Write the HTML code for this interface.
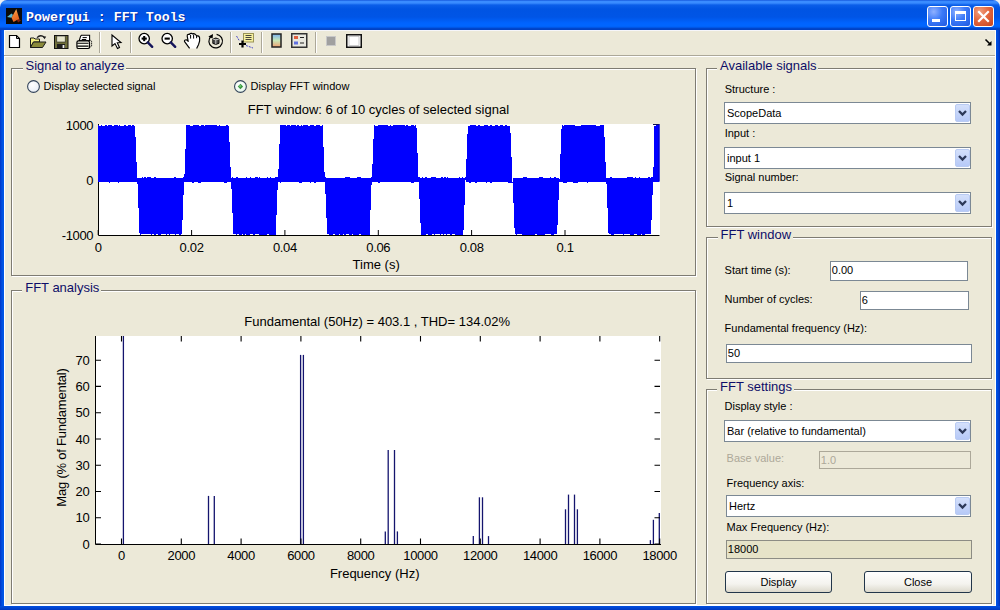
<!DOCTYPE html><html><head><meta charset="utf-8"><style>
html,body{margin:0;padding:0;}
body{width:1000px;height:610px;position:relative;overflow:hidden;background:#ECE9D8;font-family:"Liberation Sans", sans-serif;}
.t{position:absolute;white-space:pre;line-height:1;font-family:"Liberation Sans", sans-serif;}
svg{position:absolute;overflow:visible;}
</style></head><body>
<div style="position:absolute;left:0px;top:0px;width:12px;height:12px;background:#eef0f4;"></div>
<div style="position:absolute;left:988px;top:0px;width:12px;height:12px;background:#eef0f4;"></div>
<div style="position:absolute;left:0px;top:0px;width:1000px;height:30px;background:linear-gradient(to bottom,#0a48d2 0px,#3a8cff 1px,#3a8cff 3px,#0b5ee9 5px,#0054e3 9px,#0055e6 17px,#005cf2 20px,#0064ff 23px,#0066ff 26px,#005ff5 27px,#0046cc 28.5px,#003fc0 30px);border-radius:7px 7px 0 0;"></div>
<div style="position:absolute;left:0px;top:30px;width:4px;height:580px;background:linear-gradient(to right,#0035c8,#0050e0 2px,#0058ea);"></div>
<div style="position:absolute;left:996px;top:30px;width:4px;height:580px;background:linear-gradient(to left,#0030b8,#0048d8 2px,#0055e6);"></div>
<div style="position:absolute;left:0px;top:606px;width:1000px;height:4px;background:linear-gradient(to bottom,#0050e0,#0038c0);"></div>
<div style="position:absolute;left:4px;top:30px;width:1px;height:576px;background:#fff;"></div>
<div style="position:absolute;left:995px;top:30px;width:1px;height:576px;background:#fff;"></div>
<div style="position:absolute;left:4px;top:605px;width:992px;height:1px;background:#fff;"></div>
<div style="position:absolute;left:4px;top:30px;width:992px;height:1px;background:#f6f6fa;"></div>
<svg style="left:6px;top:8px" width="16" height="16" viewBox="0 0 16 16">
<defs><linearGradient id="lg1" x1="0" y1="0" x2="0.4" y2="1"><stop offset="0" stop-color="#ffd070"/><stop offset="0.5" stop-color="#f08030"/><stop offset="1" stop-color="#e06020"/></linearGradient></defs>
<rect width="16" height="16" fill="#0a0a0a"/>
<path d="M1 9 L5.5 5.5 L7 7 L5.5 9.8 Z" fill="#5ab8d0"/>
<path d="M10.3 1 L13.5 11.5 L11 12 L7.5 14 L5.5 9.8 Z" fill="url(#lg1)"/>
<path d="M11 12 L13.5 11.5 L15 12.5 L12 14.5 Z" fill="#802010"/>
</svg>
<div class="t" style="left:26.00px;top:10.54px;font-size:13.3px;color:#fff;font-family:'Liberation Mono',monospace;font-weight:bold;text-shadow:1px 1px 0 #0a2a9a;">Powergui : FFT Tools</div>
<div style="position:absolute;left:927px;top:6px;width:21px;height:21px;box-sizing:border-box;border:1px solid #fff;border-radius:3px;background:radial-gradient(circle at 30% 25%,#8fb0ff 0,#3c7af8 45%,#1f58e0 100%);"></div>
<div style="position:absolute;left:950px;top:6px;width:21px;height:21px;box-sizing:border-box;border:1px solid #fff;border-radius:3px;background:radial-gradient(circle at 30% 25%,#8fb0ff 0,#3c7af8 45%,#1f58e0 100%);"></div>
<div style="position:absolute;left:973px;top:6px;width:21px;height:21px;box-sizing:border-box;border:1px solid #fff;border-radius:3px;background:radial-gradient(circle at 30% 25%,#f0a080 0,#e4673e 45%,#c8441e 100%);"></div>
<div style="position:absolute;left:932px;top:19px;width:8px;height:3px;background:#fff;"></div>
<div style="position:absolute;left:955px;top:11px;width:11px;height:10px;box-sizing:border-box;border:1px solid #fff;border-top:3px solid #fff;"></div>
<svg style="left:973px;top:6px" width="21" height="21"><path d="M6 6 L15 15 M15 6 L6 15" stroke="#fff" stroke-width="2.2" stroke-linecap="square"/></svg>
<div style="position:absolute;left:4px;top:55px;width:991px;height:1px;background:#aca899;"></div>
<div style="position:absolute;left:4px;top:56px;width:991px;height:1px;background:#fff;"></div>
<div style="position:absolute;left:99px;top:32px;width:1px;height:21px;background:#aca899;"></div>
<div style="position:absolute;left:100px;top:32px;width:1px;height:21px;background:#fff;"></div>
<div style="position:absolute;left:130px;top:32px;width:1px;height:21px;background:#aca899;"></div>
<div style="position:absolute;left:131px;top:32px;width:1px;height:21px;background:#fff;"></div>
<div style="position:absolute;left:230px;top:32px;width:1px;height:21px;background:#aca899;"></div>
<div style="position:absolute;left:231px;top:32px;width:1px;height:21px;background:#fff;"></div>
<div style="position:absolute;left:261px;top:32px;width:1px;height:21px;background:#aca899;"></div>
<div style="position:absolute;left:262px;top:32px;width:1px;height:21px;background:#fff;"></div>
<div style="position:absolute;left:315px;top:32px;width:1px;height:21px;background:#aca899;"></div>
<div style="position:absolute;left:316px;top:32px;width:1px;height:21px;background:#fff;"></div>
<svg style="left:8px;top:34px" width="14" height="15"><path d="M1.5 1.5 H8.5 L11.5 4.5 V13.5 H1.5 Z" fill="#fff" stroke="#000" stroke-width="1.2"/><path d="M8.5 1.5 V4.5 H11.5" fill="none" stroke="#000" stroke-width="1"/></svg>
<svg style="left:29px;top:34px" width="19" height="15"><path d="M1.5 4 H5 L6 5 H10.5 V8 H4.5 L1.5 13.5 Z" fill="#f4f080" stroke="#1a1a1a" stroke-width="1"/><path d="M1.5 13.5 L4.5 8 H17 L13.5 13.5 Z" fill="#8a8a3a" stroke="#1a1a1a" stroke-width="1"/><path d="M8 3.6 Q11.5 0 15.6 3.4" fill="none" stroke="#1a1a1a" stroke-width="1.3"/><path d="M13.8 2.6 L17.2 2.6 L15.6 5.2 Z" fill="#1a1a1a"/></svg>
<svg style="left:54px;top:35px" width="15" height="14"><rect x="0.5" y="0.5" width="13.5" height="13" fill="#6e6e3a" stroke="#111"/><rect x="2.8" y="1" width="8.4" height="6" fill="#e6e6cc" stroke="#222" stroke-width="0.6"/><rect x="3" y="9" width="8" height="4.5" fill="#1e1e1e"/><rect x="8.6" y="10" width="1.8" height="3" fill="#f0f0f0"/></svg>
<svg style="left:72px;top:31px" width="24" height="20"><path d="M9.4 4.3 H17.6 V9.8 H7.2 L8.6 5.2 Z" fill="#fff" stroke="#000" stroke-width="1.1"/><path d="M10.6 6.6 H14.8 M9.8 8.5 H14.2" stroke="#000" stroke-width="1"/><rect x="4.9" y="9.9" width="12.6" height="7.6" rx="1.6" fill="#fbfbee" stroke="#000" stroke-width="1.2"/><path d="M5.2 12.3 H16.5 M5.2 15.1 H16.5" stroke="#000" stroke-width="1.1"/><path d="M17.6 8.6 L19.6 10.2 V14.8 L17.6 17" fill="none" stroke="#000" stroke-width="1" stroke-dasharray="1.2 0.8"/></svg>
<svg style="left:111px;top:34px" width="12" height="16"><path d="M1 1 L1 12 L4 9.5 L6.5 14.5 L8.5 13.5 L6.3 8.7 L10 8.5 Z" fill="#fff" stroke="#000" stroke-width="1.1"/></svg>
<svg style="left:138px;top:32px" width="17" height="17"><circle cx="6.2" cy="6.6" r="5.2" fill="#fff" stroke="#000" stroke-width="1.3"/><path d="M9.8 10.4 L14.2 14.8" stroke="#14145a" stroke-width="2.4" stroke-linecap="round"/><path d="M3.6 6.6 H8.8" stroke="#000" stroke-width="2.1"/><path d="M6.2 4 V9.2" stroke="#000" stroke-width="2.1"/></svg>
<svg style="left:161px;top:32px" width="17" height="17"><circle cx="6.2" cy="6.6" r="5.2" fill="#fff" stroke="#000" stroke-width="1.3"/><path d="M9.8 10.4 L14.2 14.8" stroke="#14145a" stroke-width="2.4" stroke-linecap="round"/><path d="M3.6 6.6 H8.8" stroke="#000" stroke-width="2.1"/></svg>
<svg style="left:180px;top:30px" width="24" height="22"><path d="M9.6 18.4 L4.6 11.6 Q4.1 10.4 5.2 10 L6.6 9.8 L8.2 11.4 L7.2 6.2 Q7 4.6 8.2 4.4 L9.3 4.4 Q10.2 3.1 11.6 3.3 L12.3 3.9 Q13.8 3.3 15.2 4.3 L16.6 5.6 Q19.5 5.8 19.6 7.8 V11 L18.6 14.4 L16.6 18.4" fill="#fff" stroke="#000" stroke-width="1.15" stroke-linejoin="round"/><path d="M10.6 4.8 V8.6 M13.6 4.6 V8.6 M16.6 5.8 V8.2" stroke="#000" stroke-width="1"/></svg>
<svg style="left:207px;top:33px" width="18" height="17"><path d="M4 3.2 A6.8 6.8 0 1 0 9.6 1.4" fill="none" stroke="#000" stroke-width="1.2"/><path d="M1.4 3.4 L6 1 L5.6 5.6 Z" fill="#000"/><path d="M5.8 6 L8.8 5 L12 6 V10.4 L8.8 11.4 L5.8 10.4 Z" fill="#4a4a4a" stroke="#000" stroke-width="0.9"/><path d="M8.8 6.8 V11.2 M5.8 6 L8.8 6.8 L12 6" stroke="#e8e8e8" stroke-width="0.8" fill="none"/></svg>
<svg style="left:235px;top:32px" width="20" height="18"><path d="M1.5 4 L4.5 9" stroke="#4848c8" stroke-width="1" stroke-dasharray="2 1"/><path d="M11 13.5 L18 16" stroke="#4848c8" stroke-width="1" stroke-dasharray="2 1"/><rect x="8.5" y="1.5" width="10" height="8.5" fill="#f6f0a0" stroke="#9a9458"/><path d="M10.5 3.5 H16.5 M10.5 5.5 H16.5 M10.5 7.5 H16.5" stroke="#333" stroke-width="0.9"/><path d="M7.5 8.5 V15.5 M4 12 H11" stroke="#000" stroke-width="2.2"/></svg>
<svg style="left:271px;top:33px" width="12" height="16"><defs><linearGradient id="cb" x1="0" y1="0" x2="0" y2="1"><stop offset="0" stop-color="#7ab0f0"/><stop offset="0.5" stop-color="#c8e8b8"/><stop offset="1" stop-color="#f0a070"/></linearGradient></defs><rect x="1" y="1" width="9" height="13" fill="url(#cb)" stroke="#222" stroke-width="1.5"/></svg>
<svg style="left:291px;top:33px" width="17" height="16"><rect x="0.75" y="0.75" width="15" height="13.5" fill="#e8e8e0" stroke="#333" stroke-width="1.5"/><rect x="3" y="3" width="4" height="3" fill="#e06040"/><rect x="3" y="8.5" width="4" height="3" fill="#6070e0"/><path d="M9 4.5 H13 M9 10 H13" stroke="#222" stroke-width="1.2"/></svg>
<div style="position:absolute;left:326px;top:36px;width:10px;height:10px;background:#a0a0a0;border:1px solid #c8c8c8;box-sizing:border-box;"></div>
<svg style="left:346px;top:34px" width="16" height="14"><rect x="0.75" y="0.75" width="14.5" height="12.5" fill="#fff" stroke="#111" stroke-width="1.5"/><rect x="3" y="2.5" width="10" height="9" fill="#fff" stroke="#b8b8b8" stroke-width="0.7"/></svg>
<svg style="left:984px;top:38px" width="10" height="9"><path d="M1.5 1.5 L6.5 6.5" stroke="#000" stroke-width="1.6"/><path d="M3 7.5 H7.5 V3 Z" fill="#000"/></svg>
<div style="position:absolute;left:12px;top:69px;width:685px;height:208px;border:1px solid #fff;box-sizing:border-box;"></div>
<div style="position:absolute;left:11px;top:68px;width:685px;height:208px;border:1px solid #7e7c73;box-sizing:border-box;"></div>
<div style="position:absolute;left:22.5px;top:62px;width:103.546875px;height:10px;background:#ECE9D8;"></div>
<div class="t" style="left:25.50px;top:58.60px;font-size:13px;color:#0e0e68;">Signal to analyze</div>
<div style="position:absolute;left:12px;top:291px;width:685px;height:314px;border:1px solid #fff;box-sizing:border-box;"></div>
<div style="position:absolute;left:11px;top:290px;width:685px;height:314px;border:1px solid #7e7c73;box-sizing:border-box;"></div>
<div style="position:absolute;left:22.2px;top:284px;width:78.671875px;height:10px;background:#ECE9D8;"></div>
<div class="t" style="left:25.20px;top:280.60px;font-size:13px;color:#0e0e68;">FFT analysis</div>
<div style="position:absolute;left:707px;top:69px;width:286px;height:159px;border:1px solid #fff;box-sizing:border-box;"></div>
<div style="position:absolute;left:706px;top:68px;width:286px;height:159px;border:1px solid #7e7c73;box-sizing:border-box;"></div>
<div style="position:absolute;left:717px;top:62px;width:101.140625px;height:10px;background:#ECE9D8;"></div>
<div class="t" style="left:720.00px;top:58.60px;font-size:13px;color:#0e0e68;">Available signals</div>
<div style="position:absolute;left:707px;top:238px;width:286px;height:142px;border:1px solid #fff;box-sizing:border-box;"></div>
<div style="position:absolute;left:706px;top:237px;width:286px;height:142px;border:1px solid #7e7c73;box-sizing:border-box;"></div>
<div style="position:absolute;left:717.5px;top:231px;width:75.0625px;height:10px;background:#ECE9D8;"></div>
<div class="t" style="left:720.50px;top:227.60px;font-size:13px;color:#0e0e68;">FFT window</div>
<div style="position:absolute;left:707px;top:390px;width:286px;height:215px;border:1px solid #fff;box-sizing:border-box;"></div>
<div style="position:absolute;left:706px;top:389px;width:286px;height:215px;border:1px solid #7e7c73;box-sizing:border-box;"></div>
<div style="position:absolute;left:717px;top:383px;width:76.5px;height:10px;background:#ECE9D8;"></div>
<div class="t" style="left:720.00px;top:379.60px;font-size:13px;color:#0e0e68;">FFT settings</div>
<svg style="left:26px;top:79px" width="15" height="15"><defs><radialGradient id="rg26" cx="0.4" cy="0.35" r="0.75"><stop offset="0" stop-color="#fff"/><stop offset="1" stop-color="#e6ecf4"/></radialGradient></defs><circle cx="7.5" cy="7.5" r="5.9" fill="url(#rg26)" stroke="#34445a" stroke-width="1.1"/></svg>
<svg style="left:233px;top:79px" width="15" height="15"><defs><radialGradient id="rg233" cx="0.4" cy="0.35" r="0.75"><stop offset="0" stop-color="#fff"/><stop offset="1" stop-color="#e4f6ea"/></radialGradient></defs><circle cx="7.449999999999989" cy="7.5" r="5.9" fill="url(#rg233)" stroke="#34445a" stroke-width="1.1"/><path d="M7.449999999999989 4.8 L10.149999999999988 7.5 L7.449999999999989 10.2 L4.7499999999999885 7.5 Z" fill="#3c9a40"/><circle cx="7.049999999999988" cy="6.9" r="1" fill="#70c878"/></svg>
<div class="t" style="left:43.50px;top:81.49px;font-size:11px;color:#000;">Display selected signal</div>
<div class="t" style="left:250.50px;top:81.49px;font-size:11px;color:#000;">Display FFT window</div>
<div class="t" style="left:78.40px;width:600px;text-align:center;top:102.50px;font-size:13px;color:#000;">FFT window: 6 of 10 cycles of selected signal</div>
<div style="position:absolute;left:98px;top:124px;width:562px;height:112px;background:#fff;"></div>
<svg style="left:0;top:0" width="1000" height="610"><defs><clipPath id="c1"><rect x="98" y="123.5" width="561.5" height="111.5"/></clipPath></defs><path d="M98.5 124 V235.5 H659.5" fill="none" stroke="#000" stroke-width="1"/><path d="M98.2 235 v-5" stroke="#000"/><path d="M191.6 235 v-5" stroke="#000"/><path d="M284.9 235 v-5" stroke="#000"/><path d="M378.3 235 v-5" stroke="#000"/><path d="M471.6 235 v-5" stroke="#000"/><path d="M565.0 235 v-5" stroke="#000"/><g clip-path="url(#c1)" fill="#0000ff" shape-rendering="crispEdges"><polygon points="90.4,181.5 92.7,124.8 92.7,124.8 94.2,126.0 95.7,126.0 97.2,124.8 98.7,125.4 100.2,126.0 101.7,125.4 103.2,126.0 104.7,126.0 106.2,124.8 107.7,126.0 109.2,124.8 110.7,125.4 112.2,125.4 113.7,126.0 115.2,124.8 116.7,124.8 118.2,126.0 119.7,125.4 121.2,126.0 122.7,126.0 124.2,125.4 125.7,125.4 127.2,126.0 128.7,124.8 130.2,124.8 131.7,126.0 133.2,124.8 134.7,126.0 135.0,124.8 137.3,181.5 137.3,182.0 135.8,182.5 134.3,181.5 132.8,182.5 131.3,181.5 129.8,181.5 128.3,182.5 126.8,181.5 125.3,182.0 123.8,181.5 122.3,182.0 120.8,182.0 119.3,182.5 117.8,182.5 116.3,182.0 114.8,182.5 113.3,182.0 111.8,182.0 110.3,182.5 108.8,182.5 107.3,182.0 105.8,181.5 104.3,182.0 102.8,181.5 101.3,181.5 99.8,181.5 98.3,182.0 96.8,181.5 95.3,182.0 93.8,182.5 92.3,182.0 90.8,182.5"/><polygon points="137.3,178.2 139.6,235.2 139.6,234.6 141.1,234.6 142.6,234.0 144.1,234.6 145.6,234.0 147.1,234.6 148.6,234.0 150.1,234.0 151.6,234.6 153.1,234.0 154.6,235.2 156.1,234.6 157.6,234.0 159.1,235.2 160.6,234.6 162.1,234.0 163.6,234.0 165.1,234.0 166.6,235.2 168.1,234.0 169.6,234.6 171.1,234.0 172.6,234.0 174.1,234.0 175.6,235.2 177.1,234.0 178.6,234.0 180.1,235.2 181.6,234.0 181.9,235.2 184.2,178.2 184.2,177.2 182.7,177.7 181.2,177.7 179.7,178.2 178.2,178.2 176.7,177.7 175.2,177.2 173.7,177.7 172.2,178.2 170.7,177.7 169.2,178.2 167.7,177.7 166.2,178.2 164.7,178.2 163.2,177.7 161.7,177.7 160.2,177.7 158.7,178.2 157.2,178.2 155.7,177.2 154.2,177.2 152.7,178.2 151.2,177.7 149.7,177.2 148.2,177.2 146.7,177.7 145.2,177.2 143.7,177.7 142.2,177.2 140.7,178.2 139.2,178.2 137.7,177.7"/><polygon points="184.2,181.5 186.5,124.8 186.5,124.8 188.0,124.8 189.5,124.8 191.0,126.0 192.5,126.0 194.0,124.8 195.5,124.8 197.0,125.4 198.5,125.4 200.0,126.0 201.5,125.4 203.0,124.8 204.5,126.0 206.0,124.8 207.5,125.4 209.0,125.4 210.5,125.4 212.0,124.8 213.5,125.4 215.0,125.4 216.5,125.4 218.0,126.0 219.5,125.4 221.0,126.0 222.5,126.0 224.0,126.0 225.5,126.0 227.0,124.8 228.5,126.0 228.8,124.8 231.1,181.5 231.1,182.5 229.6,182.0 228.1,182.0 226.6,182.5 225.1,182.5 223.6,182.5 222.1,181.5 220.6,182.0 219.1,182.0 217.6,182.0 216.1,182.5 214.6,182.0 213.1,182.5 211.6,182.0 210.1,181.5 208.6,182.0 207.1,182.5 205.6,182.0 204.1,181.5 202.6,182.0 201.1,182.5 199.6,182.5 198.1,182.5 196.6,181.5 195.1,181.5 193.6,182.5 192.1,182.5 190.6,182.0 189.1,182.0 187.6,182.0 186.1,182.5 184.6,182.0"/><polygon points="231.1,178.2 233.4,235.2 233.4,234.0 234.9,234.0 236.4,234.6 237.9,234.0 239.4,234.6 240.9,235.2 242.4,234.0 243.9,235.2 245.4,234.0 246.9,235.2 248.4,234.6 249.9,234.6 251.4,234.0 252.9,234.6 254.4,234.6 255.9,234.0 257.4,234.0 258.9,234.6 260.4,235.2 261.9,234.6 263.4,235.2 264.9,234.6 266.4,234.6 267.9,234.0 269.4,234.6 270.9,234.6 272.4,234.6 273.9,235.2 275.4,235.2 275.7,235.2 278.0,178.2 278.0,177.2 276.5,177.2 275.0,177.2 273.5,178.2 272.0,177.7 270.5,177.2 269.0,178.2 267.5,177.2 266.0,177.7 264.5,178.2 263.0,177.7 261.5,178.2 260.0,177.2 258.5,177.7 257.0,177.2 255.5,177.2 254.0,178.2 252.5,178.2 251.0,177.2 249.5,177.7 248.0,177.7 246.5,177.2 245.0,178.2 243.5,177.7 242.0,178.2 240.5,178.2 239.0,177.7 237.5,177.2 236.0,177.2 234.5,178.2 233.0,177.2 231.5,177.7"/><polygon points="278.0,181.5 280.3,124.8 280.3,125.4 281.8,124.8 283.3,124.8 284.8,124.8 286.3,126.0 287.8,124.8 289.3,125.4 290.8,126.0 292.3,124.8 293.8,125.4 295.3,125.4 296.8,126.0 298.3,124.8 299.8,126.0 301.3,125.4 302.8,126.0 304.3,124.8 305.8,125.4 307.3,125.4 308.8,126.0 310.3,125.4 311.8,125.4 313.3,125.4 314.8,126.0 316.3,125.4 317.8,125.4 319.3,125.4 320.8,126.0 322.3,125.4 322.6,124.8 324.9,181.5 324.9,181.5 323.4,182.0 321.9,181.5 320.4,181.5 318.9,181.5 317.4,182.0 315.9,182.5 314.4,182.5 312.9,182.0 311.4,182.5 309.9,182.5 308.4,181.5 306.9,181.5 305.4,182.5 303.9,182.0 302.4,182.5 300.9,182.5 299.4,182.5 297.9,182.0 296.4,182.5 294.9,182.0 293.4,181.5 291.9,181.5 290.4,182.5 288.9,182.0 287.4,181.5 285.9,181.5 284.4,181.5 282.9,181.5 281.4,182.5 279.9,182.5 278.4,181.5"/><polygon points="324.9,178.2 327.2,235.2 327.2,234.6 328.7,234.0 330.2,235.2 331.7,235.2 333.2,234.6 334.7,234.0 336.2,235.2 337.7,235.2 339.2,234.0 340.7,234.6 342.2,235.2 343.7,234.0 345.2,235.2 346.7,234.0 348.2,234.0 349.7,234.6 351.2,235.2 352.7,234.0 354.2,235.2 355.7,234.6 357.2,235.2 358.7,234.6 360.2,234.0 361.7,234.6 363.2,235.2 364.7,234.6 366.2,235.2 367.7,235.2 369.2,235.2 369.5,235.2 371.8,178.2 371.8,177.2 370.3,178.2 368.8,178.2 367.3,178.2 365.8,177.7 364.3,178.2 362.8,178.2 361.3,177.7 359.8,177.2 358.3,177.2 356.8,177.7 355.3,178.2 353.8,177.7 352.3,178.2 350.8,177.7 349.3,177.2 347.8,177.2 346.3,177.2 344.8,177.7 343.3,178.2 341.8,177.7 340.3,177.7 338.8,178.2 337.3,178.2 335.8,178.2 334.3,178.2 332.8,178.2 331.3,178.2 329.8,178.2 328.3,177.7 326.8,178.2 325.3,177.2"/><polygon points="371.8,181.5 374.1,124.8 374.1,124.8 375.6,126.0 377.1,126.0 378.6,125.4 380.1,125.4 381.6,124.8 383.1,125.4 384.6,124.8 386.1,125.4 387.6,125.4 389.1,126.0 390.6,125.4 392.1,126.0 393.6,125.4 395.1,125.4 396.6,125.4 398.1,124.8 399.6,125.4 401.1,125.4 402.6,124.8 404.1,124.8 405.6,126.0 407.1,124.8 408.6,126.0 410.1,126.0 411.6,125.4 413.1,124.8 414.6,126.0 416.1,124.8 416.4,124.8 418.7,181.5 418.7,181.5 417.2,182.0 415.7,182.0 414.2,182.5 412.7,182.5 411.2,182.5 409.7,182.0 408.2,182.5 406.7,181.5 405.2,182.5 403.7,182.0 402.2,181.5 400.7,182.0 399.2,182.5 397.7,182.0 396.2,182.5 394.7,182.0 393.2,182.0 391.7,182.5 390.2,182.0 388.7,182.0 387.2,181.5 385.7,181.5 384.2,181.5 382.7,182.5 381.2,182.0 379.7,182.5 378.2,182.5 376.7,181.5 375.2,182.0 373.7,181.5 372.2,182.0"/><polygon points="418.7,178.2 421.0,235.2 421.0,235.2 422.5,235.2 424.0,234.6 425.5,234.6 427.0,234.0 428.5,234.6 430.0,235.2 431.5,234.6 433.0,234.0 434.5,235.2 436.0,234.0 437.5,234.0 439.0,234.0 440.5,234.6 442.0,234.0 443.5,235.2 445.0,234.0 446.5,234.6 448.0,234.0 449.5,234.0 451.0,235.2 452.5,234.0 454.0,234.0 455.5,235.2 457.0,234.6 458.5,235.2 460.0,235.2 461.5,234.6 463.0,235.2 463.3,235.2 465.6,178.2 465.6,177.2 464.1,178.2 462.6,177.2 461.1,178.2 459.6,177.2 458.1,177.7 456.6,178.2 455.1,178.2 453.6,177.7 452.1,178.2 450.6,178.2 449.1,178.2 447.6,177.2 446.1,177.7 444.6,177.2 443.1,177.7 441.6,177.2 440.1,177.7 438.6,178.2 437.1,178.2 435.6,177.2 434.1,177.2 432.6,177.2 431.1,177.2 429.6,178.2 428.1,178.2 426.6,177.2 425.1,177.2 423.6,178.2 422.1,177.2 420.6,178.2 419.1,177.2"/><polygon points="465.6,181.5 467.9,124.8 467.9,125.4 469.4,126.0 470.9,124.8 472.4,124.8 473.9,124.8 475.4,124.8 476.9,126.0 478.4,124.8 479.9,125.4 481.4,126.0 482.9,126.0 484.4,125.4 485.9,125.4 487.4,125.4 488.9,126.0 490.4,125.4 491.9,125.4 493.4,126.0 494.9,125.4 496.4,124.8 497.9,125.4 499.4,126.0 500.9,124.8 502.4,125.4 503.9,126.0 505.4,124.8 506.9,125.4 508.4,126.0 509.9,126.0 510.2,124.8 512.5,181.5 512.5,182.5 511.0,182.5 509.5,182.5 508.0,182.5 506.5,182.0 505.0,181.5 503.5,182.5 502.0,182.0 500.5,181.5 499.0,181.5 497.5,181.5 496.0,182.0 494.5,182.5 493.0,182.0 491.5,182.5 490.0,182.5 488.5,182.0 487.0,182.5 485.5,182.5 484.0,181.5 482.5,181.5 481.0,182.0 479.5,181.5 478.0,181.5 476.5,182.5 475.0,182.5 473.5,182.0 472.0,181.5 470.5,182.5 469.0,182.5 467.5,182.0 466.0,182.5"/><polygon points="512.5,178.2 514.8,235.2 514.8,234.0 516.3,234.6 517.8,234.0 519.3,234.0 520.8,234.0 522.3,234.6 523.8,235.2 525.3,234.6 526.8,235.2 528.3,234.6 529.8,234.6 531.3,234.6 532.8,235.2 534.3,235.2 535.8,234.0 537.3,234.6 538.8,235.2 540.3,234.6 541.8,234.6 543.3,235.2 544.8,234.6 546.3,234.0 547.8,234.6 549.3,234.0 550.8,234.0 552.3,235.2 553.8,234.6 555.3,234.0 556.8,234.0 557.1,235.2 559.4,178.2 559.4,177.2 557.9,178.2 556.4,177.7 554.9,177.2 553.4,178.2 551.9,177.7 550.4,177.2 548.9,178.2 547.4,177.7 545.9,178.2 544.4,178.2 542.9,177.2 541.4,177.2 539.9,177.2 538.4,178.2 536.9,178.2 535.4,177.7 533.9,178.2 532.4,178.2 530.9,177.7 529.4,178.2 527.9,178.2 526.4,177.2 524.9,177.2 523.4,177.2 521.9,178.2 520.4,177.7 518.9,178.2 517.4,178.2 515.9,177.7 514.4,178.2 512.9,177.7"/><polygon points="559.4,181.5 561.7,124.8 561.7,124.8 563.2,126.0 564.7,124.8 566.2,124.8 567.7,124.8 569.2,125.4 570.7,125.4 572.2,124.8 573.7,125.4 575.2,125.4 576.7,126.0 578.2,126.0 579.7,126.0 581.2,125.4 582.7,124.8 584.2,124.8 585.7,125.4 587.2,125.4 588.7,125.4 590.2,125.4 591.7,125.4 593.2,124.8 594.7,124.8 596.2,126.0 597.7,126.0 599.2,126.0 600.7,125.4 602.2,125.4 603.7,124.8 604.0,124.8 606.3,181.5 606.3,182.5 604.8,182.0 603.3,181.5 601.8,182.0 600.3,181.5 598.8,182.5 597.3,182.0 595.8,181.5 594.3,182.0 592.8,182.5 591.3,182.0 589.8,181.5 588.3,182.5 586.8,182.5 585.3,182.0 583.8,182.5 582.3,182.0 580.8,182.0 579.3,182.0 577.8,182.5 576.3,182.5 574.8,182.5 573.3,182.5 571.8,182.0 570.3,181.5 568.8,182.0 567.3,182.5 565.8,182.5 564.3,182.5 562.8,182.5 561.3,181.5 559.8,182.5"/><polygon points="606.3,178.2 608.6,235.2 608.6,234.6 610.1,234.0 611.6,234.6 613.1,235.2 614.6,234.0 616.1,234.6 617.6,234.0 619.1,234.0 620.6,234.0 622.1,234.0 623.6,235.2 625.1,234.0 626.6,234.0 628.1,234.0 629.6,234.0 631.1,235.2 632.6,235.2 634.1,234.6 635.6,234.0 637.1,234.6 638.6,235.2 640.1,235.2 641.6,234.0 643.1,235.2 644.6,234.6 646.1,234.0 647.6,234.0 649.1,234.0 650.6,234.0 650.9,235.2 653.2,178.2 653.2,177.7 651.7,177.2 650.2,177.7 648.7,177.2 647.2,178.2 645.7,177.7 644.2,177.7 642.7,177.7 641.2,178.2 639.7,177.2 638.2,178.2 636.7,178.2 635.2,177.2 633.7,178.2 632.2,177.2 630.7,177.2 629.2,177.2 627.7,177.2 626.2,177.7 624.7,177.7 623.2,178.2 621.7,177.7 620.2,177.7 618.7,177.7 617.2,178.2 615.7,178.2 614.2,178.2 612.7,177.7 611.2,177.2 609.7,177.7 608.2,178.2 606.7,177.2"/><polygon points="653.2,181.5 654.4,124.8 654.4,126.0 655.9,125.4 657.4,125.4 658.9,125.4 660.4,125.4 661.9,126.0 663.4,124.8 664.9,125.4 666.4,125.4 667.9,124.8 669.4,124.8 670.9,125.4 672.4,126.0 673.9,124.8 675.4,126.0 676.9,124.8 678.4,126.0 679.9,126.0 681.4,124.8 682.9,124.8 684.4,126.0 685.9,124.8 687.4,126.0 688.9,125.4 690.4,126.0 691.9,126.0 693.4,125.4 694.9,126.0 696.4,124.8 697.9,126.0 698.9,124.8 700.1,181.5 700.1,182.5 698.6,181.5 697.1,182.0 695.6,181.5 694.1,182.5 692.6,182.5 691.1,181.5 689.6,182.5 688.1,181.5 686.6,181.5 685.1,182.0 683.6,182.0 682.1,182.0 680.6,181.5 679.1,182.0 677.6,182.0 676.1,182.0 674.6,182.0 673.1,182.5 671.6,182.5 670.1,182.0 668.6,182.5 667.1,182.0 665.6,182.5 664.1,182.5 662.6,182.5 661.1,182.0 659.6,182.5 658.1,182.0 656.6,181.5 655.1,182.5 653.6,181.5"/></g><path d="M653 124.5 H659.5" stroke="#101050" stroke-width="1"/><path d="M659 124 V181" stroke="#0000c0" stroke-width="1"/></svg>
<div class="t" style="left:-201.80px;width:600px;text-align:center;top:240.80px;font-size:13px;color:#000;letter-spacing:-0.35px">0</div>
<div class="t" style="left:-108.44px;width:600px;text-align:center;top:240.80px;font-size:13px;color:#000;letter-spacing:-0.35px">0.02</div>
<div class="t" style="left:-15.08px;width:600px;text-align:center;top:240.80px;font-size:13px;color:#000;letter-spacing:-0.35px">0.04</div>
<div class="t" style="left:78.28px;width:600px;text-align:center;top:240.80px;font-size:13px;color:#000;letter-spacing:-0.35px">0.06</div>
<div class="t" style="left:171.64px;width:600px;text-align:center;top:240.80px;font-size:13px;color:#000;letter-spacing:-0.35px">0.08</div>
<div class="t" style="left:265.00px;width:600px;text-align:center;top:240.80px;font-size:13px;color:#000;letter-spacing:-0.35px">0.1</div>
<div class="t" style="left:-506.80px;width:600px;text-align:right;top:118.55px;font-size:13px;color:#000;letter-spacing:-0.35px">1000</div>
<div class="t" style="left:-506.80px;width:600px;text-align:right;top:173.95px;font-size:13px;color:#000;letter-spacing:-0.35px">0</div>
<div class="t" style="left:-506.80px;width:600px;text-align:right;top:229.45px;font-size:13px;color:#000;letter-spacing:-0.35px">-1000</div>
<div class="t" style="left:76.20px;width:600px;text-align:center;top:257.50px;font-size:13px;color:#000;">Time (s)</div>
<div class="t" style="left:77.20px;width:600px;text-align:center;top:315.00px;font-size:13px;color:#000;">Fundamental (50Hz) = 403.1 , THD= 134.02%</div>
<div style="position:absolute;left:96px;top:336px;width:565px;height:208px;background:#fff;"></div>
<svg style="left:0;top:0" width="1000" height="610"><path d="M123.4 544 V336.0" stroke="#14146e" stroke-width="1.3"/><path d="M208.5 544 V495.9" stroke="#14146e" stroke-width="1.3"/><path d="M214.3 544 V495.9" stroke="#14146e" stroke-width="1.3"/><path d="M300.6 544 V354.9" stroke="#14146e" stroke-width="1.3"/><path d="M303.4 544 V354.9" stroke="#14146e" stroke-width="1.3"/><path d="M385.3 544 V531.4" stroke="#14146e" stroke-width="1.3"/><path d="M388.2 544 V450.0" stroke="#14146e" stroke-width="1.3"/><path d="M394.5 544 V450.0" stroke="#14146e" stroke-width="1.3"/><path d="M397.4 544 V531.4" stroke="#14146e" stroke-width="1.3"/><path d="M473.3 544 V536.1" stroke="#14146e" stroke-width="1.3"/><path d="M479.4 544 V497.3" stroke="#14146e" stroke-width="1.3"/><path d="M482.5 544 V497.3" stroke="#14146e" stroke-width="1.3"/><path d="M488.5 544 V536.1" stroke="#14146e" stroke-width="1.3"/><path d="M565.5 544 V509.3" stroke="#14146e" stroke-width="1.3"/><path d="M568.5 544 V494.6" stroke="#14146e" stroke-width="1.3"/><path d="M574.5 544 V494.6" stroke="#14146e" stroke-width="1.3"/><path d="M577.4 544 V509.3" stroke="#14146e" stroke-width="1.3"/><path d="M650.4 544 V540.1" stroke="#14146e" stroke-width="1.3"/><path d="M653.4 544 V519.8" stroke="#14146e" stroke-width="1.3"/><path d="M659.3 544 V513.0" stroke="#14146e" stroke-width="1.3"/><path d="M95.5 336 V544.5 H661" fill="none" stroke="#000" stroke-width="1"/><path d="M121.5 544 v-5.5 M121.5 336 v5.5" stroke="#000" stroke-width="1.1"/><path d="M181.3 544 v-5.5 M181.3 336 v5.5" stroke="#000" stroke-width="1.1"/><path d="M241.1 544 v-5.5 M241.1 336 v5.5" stroke="#000" stroke-width="1.1"/><path d="M300.9 544 v-5.5 M300.9 336 v5.5" stroke="#000" stroke-width="1.1"/><path d="M360.7 544 v-5.5 M360.7 336 v5.5" stroke="#000" stroke-width="1.1"/><path d="M420.5 544 v-5.5 M420.5 336 v5.5" stroke="#000" stroke-width="1.1"/><path d="M480.3 544 v-5.5 M480.3 336 v5.5" stroke="#000" stroke-width="1.1"/><path d="M540.1 544 v-5.5 M540.1 336 v5.5" stroke="#000" stroke-width="1.1"/><path d="M599.9 544 v-5.5 M599.9 336 v5.5" stroke="#000" stroke-width="1.1"/><path d="M659.7 544 v-5.5 M659.7 336 v5.5" stroke="#000" stroke-width="1.1"/><path d="M96 544.0 h5 M660 544.0 h-5.5" stroke="#000" stroke-width="1.1"/><path d="M96 517.7 h5 M660 517.7 h-5.5" stroke="#000" stroke-width="1.1"/><path d="M96 491.5 h5 M660 491.5 h-5.5" stroke="#000" stroke-width="1.1"/><path d="M96 465.2 h5 M660 465.2 h-5.5" stroke="#000" stroke-width="1.1"/><path d="M96 439.0 h5 M660 439.0 h-5.5" stroke="#000" stroke-width="1.1"/><path d="M96 412.7 h5 M660 412.7 h-5.5" stroke="#000" stroke-width="1.1"/><path d="M96 386.4 h5 M660 386.4 h-5.5" stroke="#000" stroke-width="1.1"/><path d="M96 360.2 h5 M660 360.2 h-5.5" stroke="#000" stroke-width="1.1"/></svg>
<div class="t" style="left:-178.50px;width:600px;text-align:center;top:549.00px;font-size:13px;color:#000;letter-spacing:-0.35px">0</div>
<div class="t" style="left:-118.70px;width:600px;text-align:center;top:549.00px;font-size:13px;color:#000;letter-spacing:-0.35px">2000</div>
<div class="t" style="left:-58.90px;width:600px;text-align:center;top:549.00px;font-size:13px;color:#000;letter-spacing:-0.35px">4000</div>
<div class="t" style="left:0.90px;width:600px;text-align:center;top:549.00px;font-size:13px;color:#000;letter-spacing:-0.35px">6000</div>
<div class="t" style="left:60.70px;width:600px;text-align:center;top:549.00px;font-size:13px;color:#000;letter-spacing:-0.35px">8000</div>
<div class="t" style="left:120.50px;width:600px;text-align:center;top:549.00px;font-size:13px;color:#000;letter-spacing:-0.35px">10000</div>
<div class="t" style="left:180.30px;width:600px;text-align:center;top:549.00px;font-size:13px;color:#000;letter-spacing:-0.35px">12000</div>
<div class="t" style="left:240.10px;width:600px;text-align:center;top:549.00px;font-size:13px;color:#000;letter-spacing:-0.35px">14000</div>
<div class="t" style="left:299.90px;width:600px;text-align:center;top:549.00px;font-size:13px;color:#000;letter-spacing:-0.35px">16000</div>
<div class="t" style="left:359.70px;width:600px;text-align:center;top:549.00px;font-size:13px;color:#000;letter-spacing:-0.35px">18000</div>
<div class="t" style="left:-510.70px;width:600px;text-align:right;top:537.65px;font-size:13px;color:#000;letter-spacing:-0.35px">0</div>
<div class="t" style="left:-510.70px;width:600px;text-align:right;top:511.39px;font-size:13px;color:#000;letter-spacing:-0.35px">10</div>
<div class="t" style="left:-510.70px;width:600px;text-align:right;top:485.13px;font-size:13px;color:#000;letter-spacing:-0.35px">20</div>
<div class="t" style="left:-510.70px;width:600px;text-align:right;top:458.87px;font-size:13px;color:#000;letter-spacing:-0.35px">30</div>
<div class="t" style="left:-510.70px;width:600px;text-align:right;top:432.61px;font-size:13px;color:#000;letter-spacing:-0.35px">40</div>
<div class="t" style="left:-510.70px;width:600px;text-align:right;top:406.35px;font-size:13px;color:#000;letter-spacing:-0.35px">50</div>
<div class="t" style="left:-510.70px;width:600px;text-align:right;top:380.09px;font-size:13px;color:#000;letter-spacing:-0.35px">60</div>
<div class="t" style="left:-510.70px;width:600px;text-align:right;top:353.83px;font-size:13px;color:#000;letter-spacing:-0.35px">70</div>
<div class="t" style="left:74.70px;width:600px;text-align:center;top:566.70px;font-size:13px;color:#000;">Frequency (Hz)</div>
<div class="t" style="left:-88.8px;top:431.1px;width:300px;text-align:center;font-size:13px;letter-spacing:-0.22px;transform:rotate(-90deg);transform-origin:150px 6.5px;">Mag (% of Fundamental)</div>
<div class="t" style="left:724.70px;top:83.59px;font-size:11px;color:#000;">Structure :</div>
<div style="position:absolute;left:724px;top:102px;width:247px;height:22px;box-sizing:border-box;border:1px solid #7b8894;background:#fff;"></div>
<div style="position:absolute;left:955px;top:104px;width:15px;height:18px;box-sizing:border-box;border:1px solid #b9cbf3;border-radius:2px;background:linear-gradient(#d4e0fb,#b6c9f7);"></div>
<svg style="left:958px;top:109px" width="9" height="8"><path d="M1 2 L4.5 5.5 L8 2" fill="none" stroke="#2c3858" stroke-width="2.3"/></svg>
<div class="t" style="left:727.00px;top:107.69px;font-size:11px;color:#000;">ScopeData</div>
<div class="t" style="left:724.70px;top:128.39px;font-size:11px;color:#000;">Input :</div>
<div style="position:absolute;left:724px;top:147px;width:247px;height:22px;box-sizing:border-box;border:1px solid #7b8894;background:#fff;"></div>
<div style="position:absolute;left:955px;top:149px;width:15px;height:18px;box-sizing:border-box;border:1px solid #b9cbf3;border-radius:2px;background:linear-gradient(#d4e0fb,#b6c9f7);"></div>
<svg style="left:958px;top:154px" width="9" height="8"><path d="M1 2 L4.5 5.5 L8 2" fill="none" stroke="#2c3858" stroke-width="2.3"/></svg>
<div class="t" style="left:727.00px;top:152.69px;font-size:11px;color:#000;">input 1</div>
<div class="t" style="left:724.70px;top:171.79px;font-size:11px;color:#000;">Signal number:</div>
<div style="position:absolute;left:724px;top:192px;width:247px;height:22px;box-sizing:border-box;border:1px solid #7b8894;background:#fff;"></div>
<div style="position:absolute;left:955px;top:194px;width:15px;height:18px;box-sizing:border-box;border:1px solid #b9cbf3;border-radius:2px;background:linear-gradient(#d4e0fb,#b6c9f7);"></div>
<svg style="left:958px;top:199px" width="9" height="8"><path d="M1 2 L4.5 5.5 L8 2" fill="none" stroke="#2c3858" stroke-width="2.3"/></svg>
<div class="t" style="left:727.00px;top:197.69px;font-size:11px;color:#000;">1</div>
<div class="t" style="left:724.60px;top:264.69px;font-size:11px;color:#000;">Start time (s):</div>
<div style="position:absolute;left:830px;top:261px;width:138px;height:20px;box-sizing:border-box;border:1px solid #7b8894;background:#fff;"></div>
<div class="t" style="left:831.80px;top:265.19px;font-size:11px;color:#000;">0.00</div>
<div class="t" style="left:724.60px;top:294.29px;font-size:11px;color:#000;">Number of cycles:</div>
<div style="position:absolute;left:860px;top:291px;width:109px;height:19px;box-sizing:border-box;border:1px solid #7b8894;background:#fff;"></div>
<div class="t" style="left:861.80px;top:295.19px;font-size:11px;color:#000;">6</div>
<div class="t" style="left:724.60px;top:322.89px;font-size:11px;color:#000;">Fundamental frequency (Hz):</div>
<div style="position:absolute;left:726px;top:344px;width:246px;height:19px;box-sizing:border-box;border:1px solid #7b8894;background:#fff;"></div>
<div class="t" style="left:727.80px;top:348.19px;font-size:11px;color:#000;">50</div>
<div class="t" style="left:724.60px;top:401.29px;font-size:11px;color:#000;">Display style :</div>
<div style="position:absolute;left:724px;top:420px;width:247px;height:22px;box-sizing:border-box;border:1px solid #7b8894;background:#fff;"></div>
<div style="position:absolute;left:955px;top:422px;width:15px;height:18px;box-sizing:border-box;border:1px solid #b9cbf3;border-radius:2px;background:linear-gradient(#d4e0fb,#b6c9f7);"></div>
<svg style="left:958px;top:427px" width="9" height="8"><path d="M1 2 L4.5 5.5 L8 2" fill="none" stroke="#2c3858" stroke-width="2.3"/></svg>
<div class="t" style="left:727.00px;top:425.69px;font-size:11px;color:#000;">Bar (relative to fundamental)</div>
<div class="t" style="left:726.60px;top:452.69px;font-size:11px;color:#aca899;">Base value:</div>
<div style="position:absolute;left:819px;top:451px;width:152px;height:18px;box-sizing:border-box;border:1px solid #aca899;background:#ECE9D8;"></div>
<div class="t" style="left:820.80px;top:455.19px;font-size:11px;color:#aca899;">1.0</div>
<div class="t" style="left:726.60px;top:477.89px;font-size:11px;color:#000;">Frequency axis:</div>
<div style="position:absolute;left:726px;top:495px;width:245px;height:22px;box-sizing:border-box;border:1px solid #7b8894;background:#fff;"></div>
<div style="position:absolute;left:955px;top:497px;width:15px;height:18px;box-sizing:border-box;border:1px solid #b9cbf3;border-radius:2px;background:linear-gradient(#d4e0fb,#b6c9f7);"></div>
<svg style="left:958px;top:502px" width="9" height="8"><path d="M1 2 L4.5 5.5 L8 2" fill="none" stroke="#2c3858" stroke-width="2.3"/></svg>
<div class="t" style="left:729.00px;top:500.69px;font-size:11px;color:#000;">Hertz</div>
<div class="t" style="left:726.60px;top:522.19px;font-size:11px;color:#000;">Max Frequency (Hz):</div>
<div style="position:absolute;left:726px;top:540px;width:246px;height:19px;box-sizing:border-box;border:1px solid #8c8c84;background:#e6e3c8;"></div>
<div class="t" style="left:727.80px;top:544.19px;font-size:11px;color:#000;">18000</div>
<div style="position:absolute;left:725px;top:571px;width:107px;height:22px;box-sizing:border-box;border:1px solid #22364a;border-radius:3px;background:linear-gradient(#fff 0%,#f4f3ee 60%,#dcd9cc 100%);"></div>
<div class="t" style="left:478.50px;width:600px;text-align:center;top:577.29px;font-size:11px;color:#000;">Display</div>
<div style="position:absolute;left:864px;top:571px;width:108px;height:22px;box-sizing:border-box;border:1px solid #22364a;border-radius:3px;background:linear-gradient(#fff 0%,#f4f3ee 60%,#dcd9cc 100%);"></div>
<div class="t" style="left:618.00px;width:600px;text-align:center;top:577.29px;font-size:11px;color:#000;">Close</div>
</body></html>
